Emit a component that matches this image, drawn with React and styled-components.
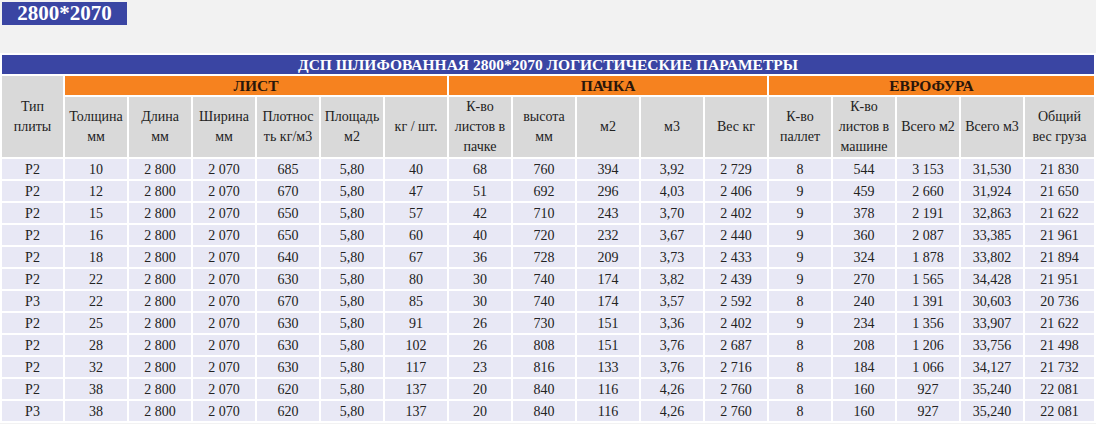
import React from "react";
import styled, { createGlobalStyle } from "styled-components";

const serif = `"Liberation Serif", "Times New Roman", Tinos, serif`;

const Global = createGlobalStyle`
  html, body { margin: 0; padding: 0; background: #f2f2f2; }
  body { font-family: ${serif}; color: #222; }
`;

const Page = styled.div`
  padding-top: 2px;
  font-family: ${serif};
`;

const Title = styled.div`
  margin-left: 2px;
  width: 125px;
  height: 23px;
  background: #3a45a3;
  color: #fff;
  font-family: ${serif};
  font-weight: bold;
  font-size: 21px;
  line-height: 23px;
  text-align: center;
`;

const Table = styled.table`
  margin-top: 28px;
  width: 1096px;
  table-layout: fixed;
  border-collapse: separate;
  border-spacing: 2px;
  background: #fff;
  font-family: ${serif};
  font-size: 14px;
`;

const base = `
  font-family: ${serif};
  font-size: 14px;
  padding: 0;
  text-align: center;
`;

const Caption = styled.th`
  ${base}
  background: #3a45a3;
  color: #fff;
  font-weight: bold;
  font-size: 15.5px;
  height: 19px;
  line-height: 19px;
`;

const Group = styled.th`
  ${base}
  background: #f6821f;
  color: #2a160a;
  font-weight: bold;
  font-size: 15.5px;
  height: 19px;
  line-height: 19px;
`;

const Head = styled.th`
  ${base}
  background: #d9d9d9;
  font-weight: normal;
  color: #222;
  height: 60px;
  line-height: 20px;
  vertical-align: middle;
`;

const Cell = styled.td`
  ${base}
  background: #e8e8f5;
  height: 18px;
  line-height: 18px;
  padding-top: 2px;
  white-space: nowrap;
  color: #222;
`;

const nb = (s) => s.replace(/ /g, "\u00a0");

const heads = [
  ["Толщина", "мм"],
  ["Длина", "мм"],
  ["Ширина", "мм"],
  ["Плотнос", "ть кг/м3"],
  ["Площадь", "м2"],
  ["кг / шт."],
  ["К-во", "листов в", "пачке"],
  ["высота", "мм"],
  ["м2"],
  ["м3"],
  ["Вес кг"],
  ["К-во", "паллет"],
  ["К-во", "листов в", "машине"],
  ["Всего м2"],
  ["Всего м3"],
  ["Общий", "вес груза"],
];

const rows = [
  ["P2", "10", "2 800", "2 070", "685", "5,80", "40", "68", "760", "394", "3,92", "2 729", "8", "544", "3 153", "31,530", "21 830"],
  ["P2", "12", "2 800", "2 070", "670", "5,80", "47", "51", "692", "296", "4,03", "2 406", "9", "459", "2 660", "31,924", "21 650"],
  ["P2", "15", "2 800", "2 070", "650", "5,80", "57", "42", "710", "243", "3,70", "2 402", "9", "378", "2 191", "32,863", "21 622"],
  ["P2", "16", "2 800", "2 070", "650", "5,80", "60", "40", "720", "232", "3,67", "2 440", "9", "360", "2 087", "33,385", "21 961"],
  ["P2", "18", "2 800", "2 070", "640", "5,80", "67", "36", "728", "209", "3,73", "2 433", "9", "324", "1 878", "33,802", "21 894"],
  ["P2", "22", "2 800", "2 070", "630", "5,80", "80", "30", "740", "174", "3,82", "2 439", "9", "270", "1 565", "34,428", "21 951"],
  ["P3", "22", "2 800", "2 070", "670", "5,80", "85", "30", "740", "174", "3,57", "2 592", "8", "240", "1 391", "30,603", "20 736"],
  ["P2", "25", "2 800", "2 070", "630", "5,80", "91", "26", "730", "151", "3,36", "2 402", "9", "234", "1 356", "33,907", "21 622"],
  ["P2", "28", "2 800", "2 070", "630", "5,80", "102", "26", "808", "151", "3,76", "2 687", "8", "208", "1 206", "33,756", "21 498"],
  ["P2", "32", "2 800", "2 070", "630", "5,80", "117", "23", "816", "133", "3,76", "2 716", "8", "184", "1 066", "34,127", "21 732"],
  ["P2", "38", "2 800", "2 070", "620", "5,80", "137", "20", "840", "116", "4,26", "2 760", "8", "160", "927", "35,240", "22 081"],
  ["P3", "38", "2 800", "2 070", "620", "5,80", "137", "20", "840", "116", "4,26", "2 760", "8", "160", "927", "35,240", "22 081"],
];

const Lines = ({ lines }) =>
  lines.map((l, i) => (
    <React.Fragment key={i}>
      {i > 0 && <br />}
      {l}
    </React.Fragment>
  ));

export default function App() {
  return (
    <Page>
      <Global />
      <Title>2800*2070</Title>
      <Table>
        <colgroup>
          <col style={{ width: 61 }} />
          {Array.from({ length: 15 }).map((_, i) => (
            <col key={i} style={{ width: 62 }} />
          ))}
          <col />
        </colgroup>
        <thead>
          <tr>
            <Caption colSpan={17}>ДСП ШЛИФОВАННАЯ 2800*2070 ЛОГИСТИЧЕСКИЕ ПАРАМЕТРЫ</Caption>
          </tr>
          <tr>
            <Head rowSpan={2}>
              Тип
              <br />
              плиты
            </Head>
            <Group colSpan={6}>ЛИСТ</Group>
            <Group colSpan={5}>ПАЧКА</Group>
            <Group colSpan={5}>ЕВРОФУРА</Group>
          </tr>
          <tr>
            {heads.map((h, i) => (
              <Head key={i}>
                <Lines lines={h} />
              </Head>
            ))}
          </tr>
        </thead>
        <tbody>
          {rows.map((r, i) => (
            <tr key={i}>
              {r.map((v, j) => (
                <Cell key={j}>{nb(v)}</Cell>
              ))}
            </tr>
          ))}
        </tbody>
      </Table>
    </Page>
  );
}
